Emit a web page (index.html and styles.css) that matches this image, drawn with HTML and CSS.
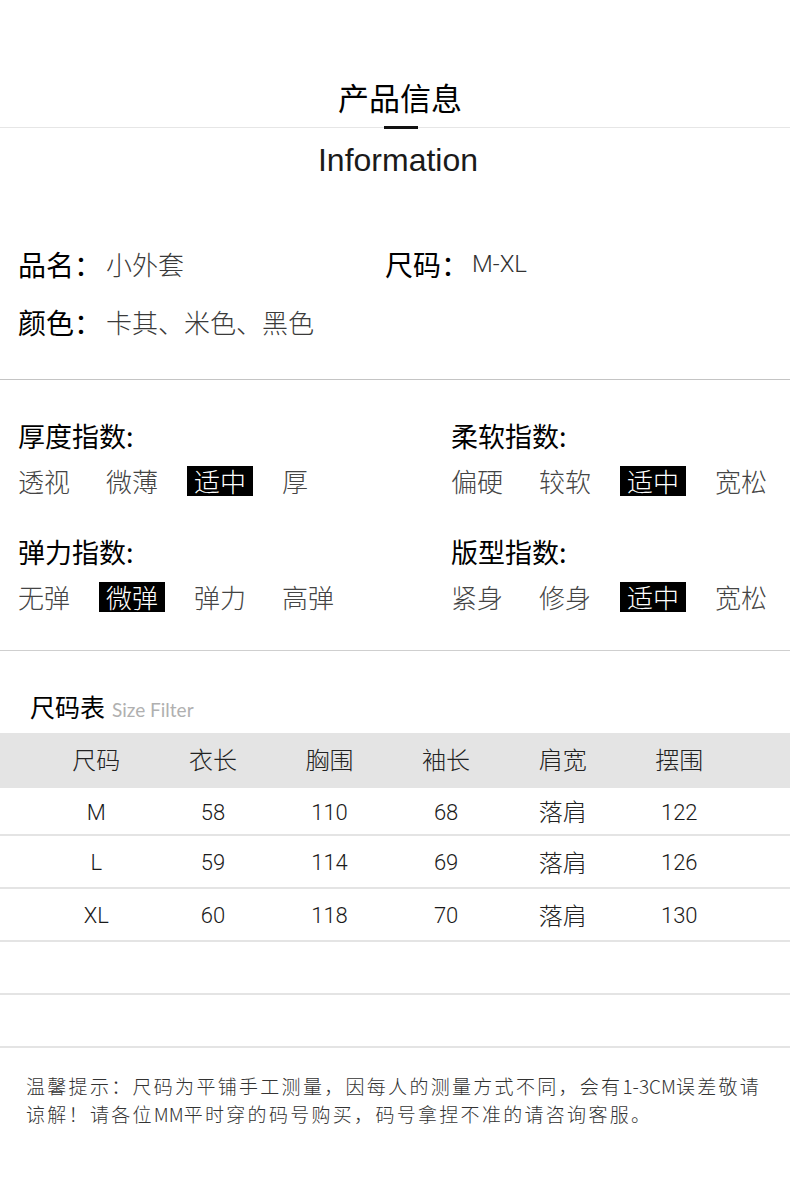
FILE: index.html
```html
<!DOCTYPE html>
<html lang="zh-CN">
<head>
<meta charset="utf-8">
<title>产品信息</title>
<link rel="stylesheet" href="styles.css">
</head>
<body>
<div class="page">
  <header class="head">
    <h1 class="title">产品信息</h1>
    <div class="rule"><span class="bar"></span></div>
    <div class="subtitle">Information</div>
  </header>

  <section class="info">
    <div class="info-row">
      <div class="info-item"><span class="lbl">品名：</span><span class="val">小外套</span></div>
      <div class="info-item"><span class="lbl">尺码：</span><span class="val latin">M-XL</span></div>
    </div>
    <div class="info-row">
      <div class="info-item wide"><span class="lbl">颜色：</span><span class="val">卡其、米色、黑色</span></div>
    </div>
  </section>

  <div class="divider"></div>

  <section class="indexes">
    <div class="idx">
      <div class="idx-title">厚度指数:</div>
      <div class="idx-vals"><span>透视</span><span>微薄</span><span class="on">适中</span><span>厚</span></div>
    </div>
    <div class="idx">
      <div class="idx-title">柔软指数:</div>
      <div class="idx-vals"><span>偏硬</span><span>较软</span><span class="on">适中</span><span>宽松</span></div>
    </div>
    <div class="idx">
      <div class="idx-title">弹力指数:</div>
      <div class="idx-vals"><span>无弹</span><span class="on">微弹</span><span>弹力</span><span>高弹</span></div>
    </div>
    <div class="idx">
      <div class="idx-title">版型指数:</div>
      <div class="idx-vals"><span>紧身</span><span>修身</span><span class="on">适中</span><span>宽松</span></div>
    </div>
  </section>

  <div class="divider second"></div>

  <section class="size">
    <div class="size-title"><span class="st-cn">尺码表</span><span class="st-en">Size Filter</span></div>
    <div class="table">
      <div class="tr th"><span>尺码</span><span>衣长</span><span>胸围</span><span>袖长</span><span>肩宽</span><span>摆围</span></div>
      <div class="tr first"><span>M</span><span>58</span><span>110</span><span>68</span><span class="cn">落肩</span><span>122</span></div>
      <div class="tr"><span>L</span><span>59</span><span>114</span><span>69</span><span class="cn">落肩</span><span>126</span></div>
      <div class="tr"><span>XL</span><span>60</span><span>118</span><span>70</span><span class="cn">落肩</span><span>130</span></div>
      <div class="tr empty"></div>
      <div class="tr empty"></div>
    </div>
  </section>

  <p class="note">温馨提示：尺码为平铺手工测量，因每人的测量方式不同，会有<span class="lat">1-3CM</span>误差敬请<br>谅解！请各位<span class="lat">MM</span>平时穿的码号购买，码号拿捏不准的请咨询客服。</p>
</div>
</body>
</html>
```

FILE: styles.css
```css
html, body {
  margin: 0;
  padding: 0;
  background: #ffffff;
}

body {
  font-family: "Noto Sans CJK SC", "Liberation Sans", sans-serif;
  color: #222;
}

.page {
  width: 790px;
  min-height: 1189px;
}

/* Header */
.head {
  padding-top: 77px;
  display: flex;
  flex-direction: column;
  align-items: center;
}

.title {
  margin: 0 0 3px 10px;
  font-size: 31px;
  line-height: 40px;
  font-weight: 400;
  color: #000;
}

.rule {
  margin-top: 6px;
  width: 100%;
  height: 3px;
  display: flex;
  justify-content: center;
  background: linear-gradient(#e6e6e6, #e6e6e6) center / 100% 1px no-repeat;
}

.bar {
  width: 34px;
  height: 3px;
  background: #111;
  margin-left: 12px;
}

.subtitle {
  margin: 11px 0 0 6px;
  font-family: "Liberation Sans", Arial, sans-serif;
  font-size: 32px;
  line-height: 40px;
  color: #1a1a1a;
}

/* Info */
.info {
  padding: 66px 0 0 18px;
  display: flex;
  flex-direction: column;
  gap: 22px;
}

.info-row {
  display: grid;
  grid-template-columns: 367px 1fr;
}

.info-item {
  display: flex;
  align-items: center;
  height: 36px;
}

.info-item.wide {
  grid-column: 1 / 3;
}

.lbl {
  font-size: 28px;
  line-height: 36px;
  font-weight: 400;
  color: #000;
}

.val {
  margin-left: 4px;
  font-size: 26px;
  line-height: 36px;
  color: #3a3a3a;
  font-weight: 300;
}

.val.latin {
  font-family: Roboto, "Liberation Sans", sans-serif;
  font-size: 24px;
  margin-left: 3px;
  color: #333;
}

.divider {
  margin-top: 39px;
  height: 1px;
  background: #c4c4c4;
}

.divider.second {
  margin-top: 37px;
  background: #cfcfcf;
}

/* Indexes */
.indexes {
  padding: 38px 0 0 18px;
  display: grid;
  grid-template-columns: 433px 1fr;
  row-gap: 37px;
}

.idx-title {
  font-size: 27px;
  line-height: 36px;
  font-weight: 400;
  color: #000;
}

.idx-vals {
  margin-top: 11px;
  display: flex;
  gap: 36px;
  height: 32px;
  align-items: center;
}

.idx-vals span {
  font-size: 26px;
  line-height: 30px;
  color: #444;
  font-weight: 300;
}

.idx-vals span.on {
  background: #000;
  color: #fff;
  padding: 0 7px;
  margin: 0 -7px;
}

/* Size table */
.size {
  padding-top: 40px;
}

.size-title {
  padding-left: 30px;
  display: flex;
  align-items: baseline;
  gap: 7px;
  height: 30px;
}

.st-cn {
  font-size: 25px;
  line-height: 30px;
  font-weight: 400;
  color: #000;
}

.st-en {
  font-family: Lato, "Liberation Sans", sans-serif;
  font-size: 19px;
  color: #b0b0b0;
}

.table {
  margin-top: 12px;
}

.tr {
  display: grid;
  grid-template-columns: repeat(6, 116.6px);
  padding-left: 38px;
  align-items: center;
  height: 51px;
  border-bottom: 2px solid #e4e4e4;
}

.tr span {
  text-align: center;
  font-family: Roboto, "Liberation Sans", sans-serif;
  font-weight: 300;
  font-size: 22px;
  line-height: 26px;
  padding-top: 3px;
  color: #1a1a1a;
}

.tr span.cn {
  font-family: "Noto Sans CJK SC", sans-serif;
  font-size: 24px;
  font-weight: 300;
  padding-top: 0;
  color: #222;
}

.tr.th {
  height: 55px;
  background: #e4e4e4;
  border-bottom: none;
}

.tr.th span {
  font-family: "Noto Sans CJK SC", sans-serif;
  font-size: 24px;
  font-weight: 300;
  padding-top: 0;
  padding-bottom: 3px;
  color: #222;
}

.tr.first {
  height: 46px;
}

/* Note */
.note {
  margin: 24px 0 0 0;
  padding-left: 26px;
  font-size: 19px;
  line-height: 28px;
  letter-spacing: 2.3px;
  color: #333;
  font-weight: 300;
  white-space: nowrap;
}

.note .lat {
  letter-spacing: 0;
}
```
